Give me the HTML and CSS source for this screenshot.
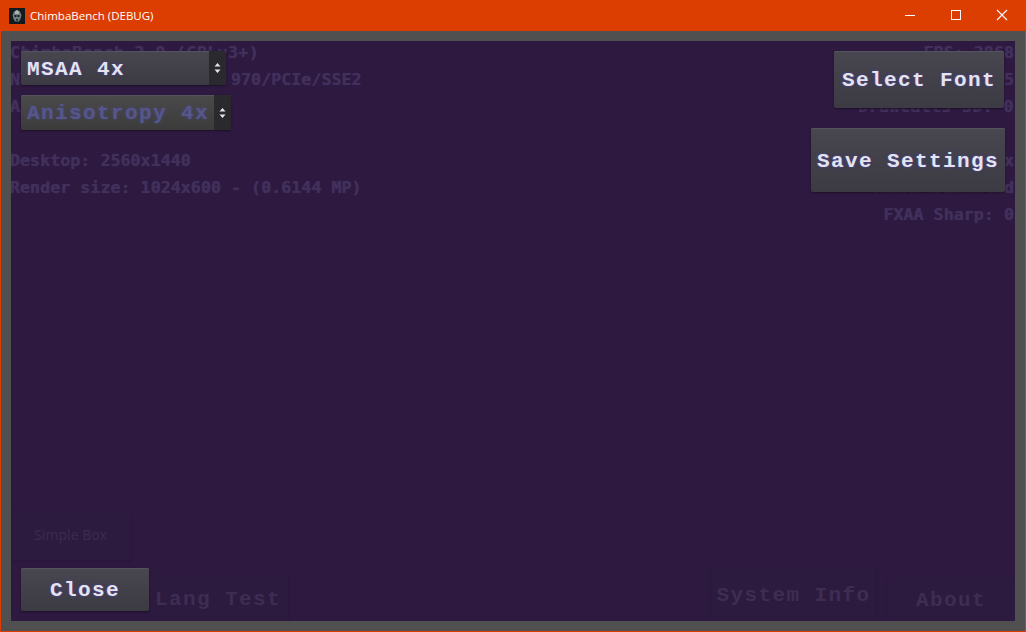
FILE: index.html
```html
<!DOCTYPE html>
<html lang="en">
<head>
<meta charset="utf-8">
<title>ChimbaBench (DEBUG)</title>
<link rel="stylesheet" href="styles.css">
</head>
<body>
<div class="window">
  <header class="titlebar">
    <svg class="app-icon" width="16" height="16" viewBox="0 0 16 16">
      <rect width="16" height="16" fill="#121a1e"/>
      <path d="M8 2 11 3.500 12.500 7 11.500 11 10 13.500H6L4.500 11 3.500 7 5 3.500Z" fill="#6f7a7e"/>
      <path d="M8 2 10 3.500 10 6H6V3.500Z" fill="#aab2b4"/>
      <path d="M5.500 7h2v2h-2zM8.500 7h2v2h-2zM7 11h2v1.500H7z" fill="#1a2226"/>
    </svg>
    <span class="app-title">ChimbaBench (DEBUG)</span>
    <div class="caption-buttons">
      <svg class="caption" width="46" height="31" viewBox="0 0 46 31"><path d="M18 15.500H28" stroke="#fff"/></svg>
      <svg class="caption" width="46" height="31" viewBox="0 0 46 31"><rect x="18.500" y="10.500" width="9" height="9" fill="none" stroke="#fff"/></svg>
      <svg class="caption" width="46" height="31" viewBox="0 0 46 31"><path d="M18 10 28 20M28 10 18 20" stroke="#fff" stroke-width="1.100"/></svg>
    </div>
  </header>
  <main class="client">
    <div class="canvas">
      <div class="hud hud-left">
        <p class="hud-wide">ChimbaBench 2.0 (GPLv3+)</p>
        <p>NVIDIA    GeForce GTX 970/PCIe/SSE2</p>
        <p>AA: MSAA 4x</p>
        <p class="hud-gap">Desktop: 2560x1440</p>
        <p>Render size: 1024x600 - (0.6144 MP)</p>
      </div>
      <div class="hud hud-right">
        <p>FPS: 2868</p>
        <p>Frame: 0.35</p>
        <p class="hud-wide">DrawCalls 3D: 0</p>
        <p class="hud-gap">Anisotropy 4x</p>
        <p>FXAA: Disabled</p>
        <p>FXAA Sharp: 0</p>
      </div>

      <div class="ghost ghost-simple">Simple Box</div>
      <div class="ghost ghost-lang">Lang Test</div>
      <div class="ghost ghost-system">System Info</div>
      <div class="ghost ghost-about">About</div>

      <div class="combo combo-msaa">
        <span class="combo-value">MSAA 4x</span>
        <span class="combo-arrows"><svg width="7" height="10" viewBox="0 0 7 10"><path d="M3.500 0 6.500 3.500H.5ZM3.500 10 .5 6.500H6.500Z" fill="#e4e4e8"/></svg></span>
      </div>
      <div class="combo combo-aniso">
        <span class="combo-value dim">Anisotropy 4x</span>
        <span class="combo-arrows"><svg width="7" height="10" viewBox="0 0 7 10"><path d="M3.500 0 6.500 3.500H.5ZM3.500 10 .5 6.500H6.500Z" fill="#e4e4e8"/></svg></span>
      </div>

      <button class="btn btn-font">Select Font</button>
      <button class="btn btn-save">Save Settings</button>
      <button class="btn btn-close">Close</button>
    </div>
  </main>
</div>
</body>
</html>
```
FILE: styles.css
```css
* { box-sizing: border-box; }
html, body { margin: 0; height: 100%; overflow: hidden; }
body { background: #505050; }
.window {
  width: 1026px; height: 632px;
  display: flex; flex-direction: column;
  border: 1px solid #dc3d00; border-top: 0;
  background: #505050;
}
.titlebar {
  height: 31px; flex: none;
  display: flex; align-items: center;
  background: #dc3d00;
  padding-left: 8px;
}
.app-icon { flex: none; }
.app-title {
  margin-left: 5px;
  font: 11.5px "Open Sans", "Noto Sans", sans-serif;
  color: #fff;
}
.caption-buttons { margin-left: auto; display: flex; }
.caption { display: block; }
.client { flex: 1; padding: 10px; min-height: 0; }
.canvas {
  position: relative; height: 100%;
  background: #2e1a40; overflow: hidden;
}
.hud {
  position: absolute; top: -2px;
  font: bold 16.7px/27px "DejaVu Sans Mono", monospace;
  color: #41305b;
  text-shadow: 0 0 1px #41305b;
}
.hud p { margin: 0; white-space: pre; }
.hud .hud-gap { margin-top: 27px; }
.hud .hud-wide { letter-spacing: .33px; }
.hud-left { left: -1px; }
.hud-right { right: 1px; text-align: right; }

.ghost {
  position: absolute;
  display: flex; align-items: center; justify-content: center;
  background: #2d1a3f;
  box-shadow: 0 1px 2px #28163a;
  font: bold 21px "Liberation Mono", monospace;
  letter-spacing: 1.4px;
  color: #3e2d52;
  padding-top: 2px;
}
.ghost-simple { left: 0; top: 471px; width: 119px; height: 48px; font: 14px "Noto Sans", sans-serif; letter-spacing: 0; padding: 0 0 3px; color: #3b2a4e; }
.ghost-lang { left: 137px; top: 534px; width: 140px; height: 46px; }
.ghost-system { left: 700px; top: 526px; width: 165px; height: 54px; }
.ghost-about { left: 876px; top: 537px; width: 128px; height: 43px; }

.combo {
  position: absolute; left: 10px;
  display: flex;
  background: linear-gradient(#48464f, #3c3a43);
  border-radius: 2px;
  box-shadow: 0 1px 2px #1e1028, inset 0 1px 0 #55535b;
  overflow: hidden;
}
.combo-msaa { top: 10px; width: 205px; height: 34px; }
.combo-aniso { top: 54px; width: 210px; height: 35px; background: linear-gradient(#4b4a4a, #3c3b3c); }
.combo-value {
  flex: 1; padding: 2px 0 0 6px;
  font: bold 21px/34px "Liberation Mono", monospace;
  letter-spacing: 1.4px;
  color: #e4e4ea;
  text-shadow: 0 0 3px #4a4490, 0 0 2px #4a4490;
  white-space: pre;
}
.combo-value.dim { color: #56568c; text-shadow: 0 0 3px #4a4a80; }
.combo-arrows {
  flex: none; width: 17px;
  display: flex; align-items: center; justify-content: center;
  background: #2a2a2e;
}
.btn {
  position: absolute; padding: 2px 0 0;
  border: 0; border-radius: 2px;
  background: linear-gradient(#48464f, #3c3a43);
  box-shadow: 0 1px 2px #1e1028, inset 0 1px 0 #55535b;
  font: bold 21px "Liberation Mono", monospace;
  letter-spacing: 1.4px;
  color: #e4e4ea;
  text-shadow: 0 0 3px #4a4490, 0 0 2px #4a4490;
  white-space: pre;
}
.btn-font { left: 823px; top: 10px; width: 170px; height: 57px; }
.btn-save { left: 800px; top: 87px; width: 194px; height: 64px; }
.btn-close { left: 10px; top: 527px; width: 128px; height: 43px; }
```
